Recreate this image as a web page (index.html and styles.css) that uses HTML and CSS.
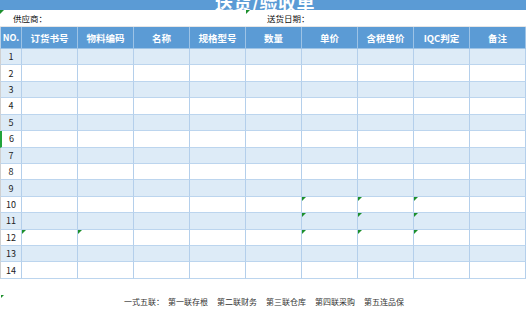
FILE: index.html
```html
<!DOCTYPE html>
<html lang="zh">
<head>
<meta charset="utf-8">
<link rel="stylesheet" href="styles.css">
</head>
<body>
<div class="sheet">
  <div class="title"><span>送货/验收单</span></div>
  <div class="info">
    <div class="info-cell mark"><span class="label first">供应商：</span></div>
    <div class="info-cell mark"><span class="label second">送货日期：</span></div>
  </div>
  <div class="grid">
    <div class="hd no">NO.</div><div class="hd">订货书号</div><div class="hd">物料编码</div><div class="hd">名称</div><div class="hd">规格型号</div><div class="hd">数量</div><div class="hd">单价</div><div class="hd">含税单价</div><div class="hd">IQC判定</div><div class="hd">备注</div>
  </div>
  <div class="grid body" id="body"></div>
  <div class="footer mark-foot">
    <span class="lead">一式五联：</span><span>第一联存根</span><span>第二联财务</span><span>第三联仓库</span><span>第四联采购</span><span>第五连品保</span>
  </div>
</div>
<script>
  var body = document.getElementById('body');
  var marks = {10:[6,7,8], 11:[6,7,8], 12:[1,2,6,7,8]};
  var html = '';
  for (var r = 1; r <= 14; r++) {
    var cls = r % 2 ? 'odd' : 'even';
    for (var c = 0; c < 10; c++) {
      var extra = '';
      if (c === 0) extra += ' num';
      if (c === 0 && r === 6) extra += ' sel';
      if (marks[r] && marks[r].indexOf(c) >= 0) extra += ' mark';
      html += '<div class="cell ' + cls + extra + '">' + (c === 0 ? r : '') + '</div>';
    }
  }
  body.innerHTML = html;
</script>
</body>
</html>
```
FILE: styles.css
```css
* { box-sizing: border-box; }
html, body { margin: 0; padding: 0; background: #fff; }
body {
  font-family: "Noto Sans CJK SC", "Noto Sans", sans-serif;
  color: #222;
}
.sheet { width: 526px; }
.title {
  height: 10px;
  background: #5b9bd5;
  overflow: hidden;
  display: flex;
  justify-content: center;
}
.title span {
  display: block;
  color: #fff;
  font-size: 18px;
  font-weight: 700;
  line-height: 16px;
  height: 10px;
  overflow: hidden;
  display: flex;
  align-items: flex-end;
  margin-left: 4px;
  letter-spacing: 0.5px;
}
.info {
  height: 17px;
  display: grid;
  grid-template-columns: 246px 1fr;
  border-bottom: 1px solid #e6e6e6;
}
.info-cell { position: relative; display: flex; align-items: center; padding-bottom: 1px; }
.label { font-size: 8.5px; line-height: 12px; color: #111; }
.label.first { padding-left: 13px; }
.label.second { padding-left: 21px; }
.grid {
  display: grid;
  grid-template-columns: 22px repeat(9, 56px);
}
.hd {
  height: 22px;
  background: #5b9bd5;
  color: #fff;
  font-size: 9.5px;
  font-weight: 700;
  display: flex;
  align-items: center;
  justify-content: center;
  border-right: 1px solid #9dc3e6;
  border-bottom: 1px solid #9dc3e6;
}
.hd.no { border-left: 1px solid #b8cfe6; font-size: 9px; }
.body { grid-template-rows: repeat(14, 16.43px); }
.cell {
  position: relative;
  border-right: 1px solid #b4cfeb;
  border-bottom: 1px solid #bcd5ee;
}
.cell.odd { background: #ddebf7; }
.cell.even { background: #fff; }
.cell.num {
  border-left: 1px solid #d0d0d0;
  font-size: 9px;
  color: #222;
  display: flex;
  align-items: center;
  justify-content: center;
}
.cell.num.sel { border-left: 2px solid #21a33a; }
.mark::before {
  content: "";
  position: absolute;
  left: 0;
  top: 0;
  width: 0;
  height: 0;
  border-top: 4px solid #1c8f2c;
  border-right: 4px solid transparent;
}
.footer {
  position: relative;
  margin-top: 17px;
  display: flex;
  justify-content: center;
  gap: 9px;
  font-size: 8px;
  line-height: 12px;
  color: #333;
  padding-left: 2px;
}
.footer .lead { margin-right: -5px; }
.mark-foot::before {
  content: "";
  position: absolute;
  left: 1px;
  top: -1px;
  border-top: 3px solid #1c8f2c;
  border-right: 3px solid transparent;
}
```
